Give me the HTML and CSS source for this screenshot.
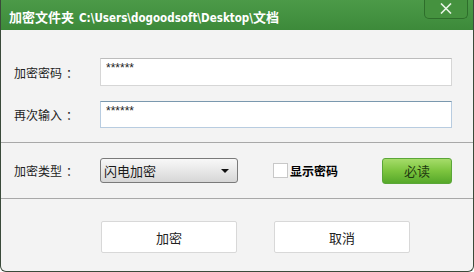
FILE: index.html
```html
<!DOCTYPE html>
<html lang="zh-CN">
<head>
    <meta charset="UTF-8">
    <title>加密文件夹</title>
    <link rel="stylesheet" href="styles.css">
</head>
<body>
    <div class="window">
        <div class="titlebar">
            <span class="title">加密文件夹 <span class="path">C:\Users\dogoodsoft\Desktop\</span>文档</span>
            <button class="close" title="关闭">
                <svg width="12" height="11" viewBox="0 0 12 11">
                    <path d="M1 0.5 L11 10.5 M11 0.5 L1 10.5" stroke="#e8f4e6" stroke-width="1.6" fill="none"/>
                </svg>
            </button>
        </div>

        <div class="section passwords">
            <div class="row">
                <label class="label">加密密码<span class="colon">：</span></label>
                <input class="field" type="text" value="******">
            </div>
            <div class="row">
                <label class="label">再次输入<span class="colon">：</span></label>
                <input class="field focused" type="text" value="******">
            </div>
        </div>

        <div class="section options">
            <label class="label">加密类型<span class="colon">：</span></label>
            <div class="select">
                <span>闪电加密</span>
                <span class="arrow"></span>
            </div>
            <label class="show-pass">
                <span class="check"></span>显示密码
            </label>
            <button class="must-read">必读</button>
        </div>

        <div class="section actions">
            <button class="btn">加密</button>
            <button class="btn">取消</button>
        </div>
    </div>
</body>
</html>
```

FILE: styles.css
```css
* {
    box-sizing: border-box;
}

body {
    margin: 0;
    font-family: "Liberation Sans", "Noto Sans CJK SC", sans-serif;
    font-size: 12px;
    color: #1a1a1a;
    background: #ffffff;
}

.window {
    width: 474px;
    height: 272px;
    background: #f3f3f3;
    border: 1px solid #3a4a3a;
    border-top: none;
    border-radius: 0 0 6px 6px;
    display: flex;
    flex-direction: column;
    overflow: hidden;
}

.titlebar {
    height: 30px;
    background: linear-gradient(#4c9a48, #3d8a3a);
    display: flex;
    align-items: center;
    justify-content: space-between;
    padding: 2px 0 0 9px;
    margin: 0 -1px;
    position: relative;
}

.title {
    color: #ffffff;
    font-family: "Noto Sans CJK SC", sans-serif;
    font-weight: bold;
    font-size: 13px;
}

.title .path {
    font-family: "DejaVu Sans Condensed", "Noto Sans CJK SC", sans-serif;
    font-size: 11.5px;
    margin-left: 2px;
}

.close {
    position: absolute;
    top: -1px;
    right: 6px;
    width: 44px;
    height: 20px;
    background: #45923f;
    border: 1px solid #2e6e2b;
    border-top: none;
    border-radius: 0 0 5px 5px;
    display: flex;
    align-items: center;
    justify-content: center;
    padding: 0;
}

.label {
    width: 86px;
    padding-left: 13px;
    font-family: "Noto Sans CJK SC", sans-serif;
    font-size: 12px;
    color: #222;
}

.colon {
    margin-left: 4px;
}

.passwords {
    display: flex;
    flex-direction: column;
    gap: 15px;
    padding-top: 28px;
    height: 113px;
    border-bottom: 1px solid #a8a8a8;
}

.row {
    display: flex;
    align-items: center;
}

.field {
    width: 352px;
    height: 28px;
    margin-left: 13px;
    border: 1px solid #d6d6d6;
    border-top-color: #bcbcbc;
    background: #ffffff;
    font-family: "Liberation Sans", sans-serif;
    font-size: 12px;
    padding: 0 0 8px 5px;
    color: #222;
}

.field.focused {
    border-color: #b8cce0;
    border-top-color: #7a98ae;
    height: 27px;
}

.options {
    display: flex;
    align-items: center;
    height: 56px;
    border-bottom: 1px solid #a8a8a8;
}

.select {
    width: 138px;
    height: 25px;
    margin-left: 13px;
    border: 1px solid #7a7a7a;
    border-radius: 3px;
    background: linear-gradient(#f8f8f8, #e6e6e6 55%, #d6d6d6);
    display: flex;
    align-items: center;
    justify-content: space-between;
    padding: 0 8px 0 3px;
    font-family: "Noto Sans CJK SC", sans-serif;
    font-size: 13px;
}

.arrow {
    width: 0;
    height: 0;
    border-left: 4px solid transparent;
    border-right: 4px solid transparent;
    border-top: 4px solid #111;
}

.show-pass {
    display: flex;
    align-items: center;
    margin-left: 35px;
    font-family: "Noto Sans CJK SC", sans-serif;
    font-weight: bold;
    font-size: 12px;
    color: #000;
}

.check {
    width: 15px;
    height: 15px;
    border: 1px solid #c8c8c8;
    background: #ffffff;
    margin-right: 2px;
}

.must-read {
    margin-left: 44px;
    width: 70px;
    height: 26px;
    border: 1px solid #5aa638;
    border-radius: 3px;
    background: linear-gradient(#a6dc6a, #7cc43e 50%, #56a82a);
    font-family: "Noto Sans CJK SC", sans-serif;
    font-size: 13px;
    color: #1e3a10;
    padding: 0;
}

.actions {
    display: flex;
    gap: 37px;
    padding: 22px 0 0 100px;
}

.btn {
    width: 136px;
    height: 32px;
    background: #ffffff;
    border: 1px solid #d8d8d8;
    border-radius: 2px;
    font-family: "Noto Sans CJK SC", sans-serif;
    font-size: 13px;
    color: #222;
    padding: 0;
}
```
